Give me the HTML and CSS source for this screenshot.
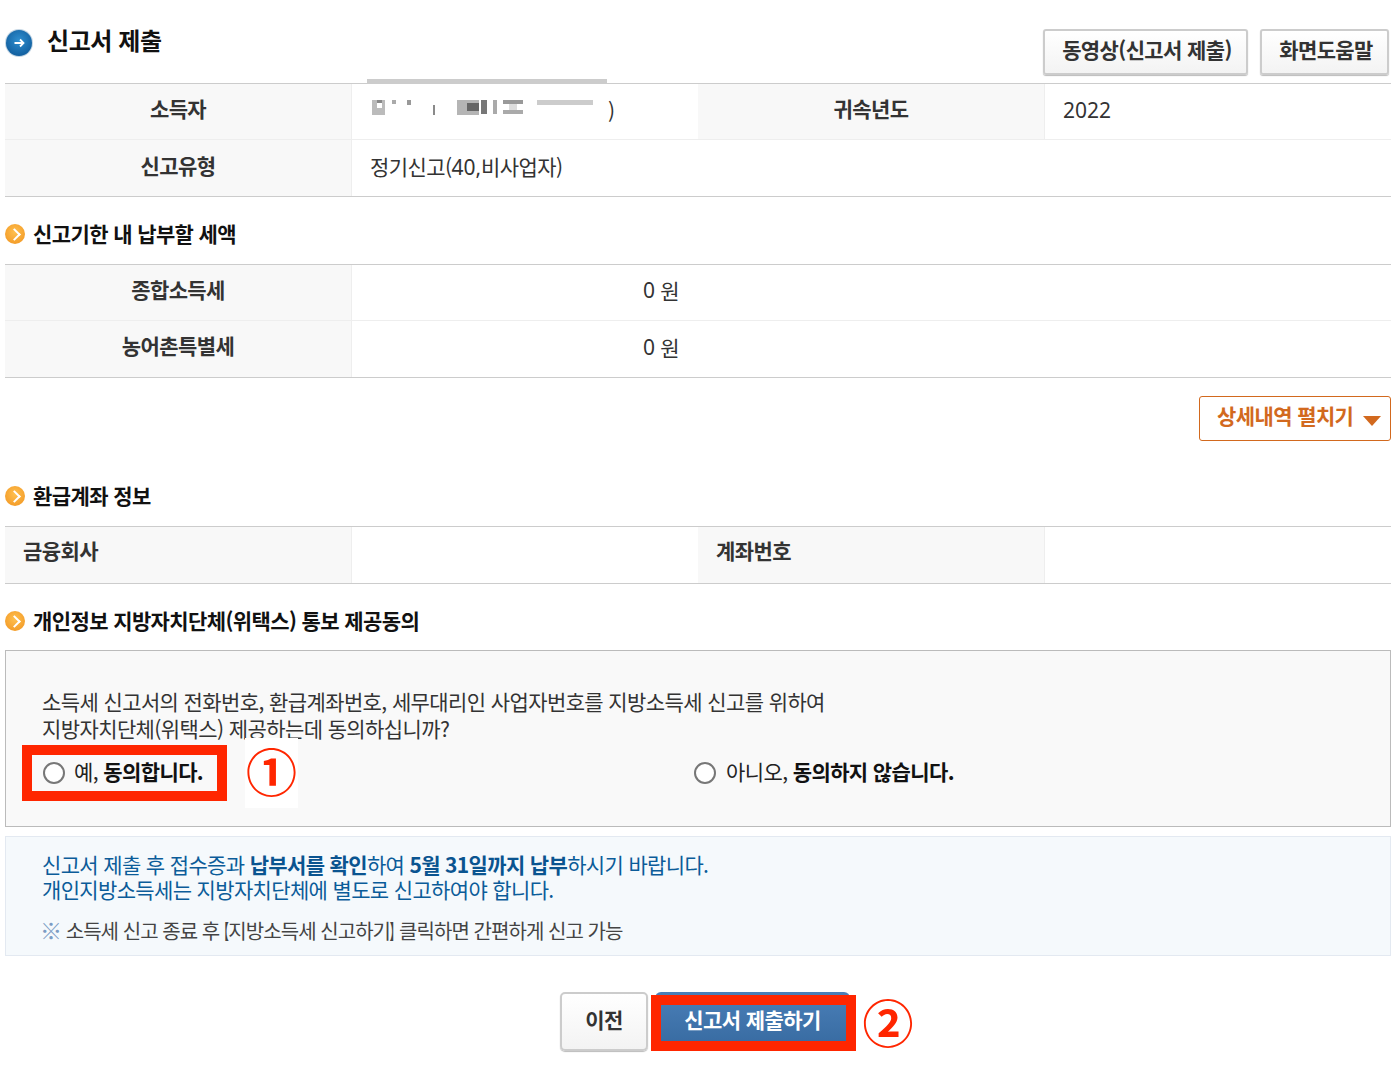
FILE: index.html
```html
<!DOCTYPE html>
<html lang="ko">
<head>
<meta charset="utf-8">
<title>신고서 제출</title>
<link rel="stylesheet" href="styles.css">
</head>
<body>
<main class="page">
  <header class="top">
    <h1 class="title">
      <svg class="title-icon" width="28" height="28" viewBox="0 0 28 28"><defs><radialGradient id="bl" cx="50%" cy="40%" r="60%"><stop offset="0" stop-color="#2f8fd0"/><stop offset="1" stop-color="#125f9f"/></radialGradient></defs><circle cx="14" cy="14" r="14" fill="#c4d6e4"/><circle cx="14" cy="14" r="13" fill="url(#bl)"/><path d="M9.500 14h9M15 10.500L18.500 14L15 17.500" fill="none" stroke="#fff" stroke-width="1.800"/></svg>
      <span>신고서 제출</span>
    </h1>
    <div class="top-btns">
      <button class="gbtn video">동영상(신고서 제출)</button>
      <button class="gbtn help">화면도움말</button>
    </div>
    <i class="tab-line"></i>
  </header>

  <div class="tbl four first">
    <div class="th">소득자</div>
    <div class="td mosaic-cell">
      <svg width="250" height="24" viewBox="0 0 250 24"><g fill="#8a8a8a"><rect x="3" y="3" width="13" height="15" fill="#bbb"/><rect x="8" y="6" width="5" height="5" fill="#fff"/><rect x="8" y="3" width="5" height="3" fill="#888"/><rect x="23" y="3" width="4" height="4" fill="#aaa"/><rect x="38" y="3" width="4" height="5" fill="#999"/><rect x="64" y="8" width="2" height="10"/><rect x="88" y="3" width="22" height="15" fill="#b5b5b5"/><rect x="98" y="6" width="12" height="8" fill="#666"/><rect x="112" y="3" width="6" height="14" fill="#777"/><rect x="124" y="3" width="4" height="14" fill="#aaa"/><rect x="134" y="3" width="20" height="4" fill="#999"/><rect x="134" y="13" width="20" height="4" fill="#aaa"/><rect x="140" y="7" width="8" height="6" fill="#ddd"/><rect x="168" y="3" width="56" height="5" fill="#ccc"/></g></svg>
      <span class="paren">)</span>
    </div>
    <div class="th">귀속년도</div>
    <div class="td year"><span class="latin">2022</span></div>
    <div class="th">신고유형</div>
    <div class="td span3"><span>정기신고(<span class="latin">40,</span>비사업자)</span></div>
  </div>

  <h2 class="sec sec-a"><i class="dot"></i>신고기한 내 납부할 세액</h2>
  <div class="tbl pair">
    <div class="th">종합소득세</div>
    <div class="td amount"><span class="latin">0</span>&nbsp;원</div>
    <div class="th">농어촌특별세</div>
    <div class="td amount"><span class="latin">0</span>&nbsp;원</div>
  </div>

  <div class="more-row">
    <button class="more">상세내역 펼치기<i class="tri"></i></button>
  </div>

  <h2 class="sec sec-b"><i class="dot"></i>환급계좌 정보</h2>
  <div class="tbl four bank">
    <div class="th left">금융회사</div>
    <div class="td"></div>
    <div class="th left">계좌번호</div>
    <div class="td"></div>
  </div>

  <h2 class="sec sec-c"><i class="dot"></i>개인정보 지방자치단체(위택스) 통보 제공동의</h2>
  <section class="agree">
    <p class="q">소득세 신고서의 전화번호, 환급계좌번호, 세무대리인 사업자번호를 지방소득세 신고를 위하여<br>지방자치단체(위택스) 제공하는데 동의하십니까?</p>
    <div class="choices">
      <label class="choice yes"><i class="radio"></i><span>예, <b>동의합니다.</b></span><i class="red-box"></i><i class="num num-one">①</i></label>
      <label class="choice"><i class="radio"></i><span>아니오, <b>동의하지 않습니다.</b></span></label>
    </div>
  </section>

  <section class="notice">
    <p class="blue">신고서 제출 후 접수증과 <b>납부서를 확인</b>하여 <b>5월 31일까지 납부</b>하시기 바랍니다.<br>개인지방소득세는 지방자치단체에 별도로 신고하여야 합니다.</p>
    <p class="note"><span class="mark">※</span> 소득세 신고 종료 후<span class="brk">【</span>지방소득세 신고하기<span class="brk">】</span>클릭하면 간편하게 신고 가능</p>
  </section>

  <div class="actions">
    <button class="gbtn prev">이전</button>
    <div class="submit-wrap">
      <button class="submit">신고서 제출하기</button>
      <i class="red-box"></i>
      <i class="num num-two">②</i>
    </div>
  </div>
</main>
</body>
</html>
```

FILE: styles.css
```css
* { box-sizing: border-box; }
html, body { margin: 0; padding: 0; background: #fff; }
body {
  font-family: "Noto Sans CJK KR", "Noto Sans", sans-serif;
  color: #333;
  font-size: 21px;
  letter-spacing: -0.6px;
}
i { font-style: normal; }
.page { width: 1391px; height: 1092px; padding-left: 5px; }
.latin { font-family: "Noto Sans", sans-serif; letter-spacing: 0; }

.top { height: 83px; display: flex; justify-content: space-between; position: relative; }
.title {
  margin: 0; padding-top: 26px; display: flex; align-items: flex-start; gap: 14px;
  font-size: 24px; line-height: 28px; font-weight: 700; color: #111; letter-spacing: -0.4px;
}
.title-icon { margin-top: 3px; flex: none; }
.top-btns { display: flex; gap: 12px; padding: 29px 2px 0 0; }
.tab-line { position: absolute; left: 362px; top: 79px; width: 240px; height: 4px; background: #ccc; }

.gbtn {
  height: 46px; padding: 0 0 6px 3px;
  font: 700 21px/1 "Noto Sans CJK KR", sans-serif; letter-spacing: -0.6px; color: #333;
  background: linear-gradient(#fff, #f3f3f3);
  border: 2px solid #ccc; border-radius: 3px;
  box-shadow: 0 1px 1px #bbb;
}
.video { width: 205px; }
.help { width: 129px; }

.tbl { display: grid; border-top: 1px solid #ccc; border-bottom: 1px solid #ccc; }
.four { grid-template-columns: 347px 346px 347px 346px; }
.pair { grid-template-columns: 347px 1039px; }
.th {
  height: 56px; background: #f8f8f8; border-right: 1px solid #eee; border-bottom: 1px solid #eee;
  display: flex; align-items: center; justify-content: center; padding-bottom: 8px;
  font-weight: 700; color: #333;
}
.td {
  height: 56px; border-bottom: 1px solid #eee; display: flex; align-items: center;
  padding: 0 18px 5px; color: #333;
}
.year { padding-bottom: 3px; }
.first .span3 { grid-column: span 3; padding-bottom: 5px; }
.tbl > .th:nth-last-child(2), .tbl > .td:last-child { border-bottom: 0; }
.first > .th:nth-child(5) { border-bottom: 0; padding-bottom: 6px; }
.bank > .th, .bank > .td { border-bottom: 0; }
.bank > .th { padding-bottom: 10px; }
.left { justify-content: flex-start; padding-left: 18px; }
.amount { padding-left: 291px; padding-bottom: 5px; }
.mosaic-cell { padding-left: 17px; position: relative; }
.paren { position: absolute; left: 256px; top: 11px; }

.sec {
  margin: 0; display: flex; align-items: flex-start; gap: 8px;
  font-size: 21px; line-height: 28px; font-weight: 700; color: #111;
}
.sec-a { padding-top: 22px; height: 67px; }
.sec-b { padding-top: 40px; height: 85px; }
.sec-c { padding-top: 22px; height: 66px; }
.dot {
  width: 20px; height: 20px; border-radius: 50%; flex: none; margin-top: 5px; position: relative;
  background: radial-gradient(circle at 50% 40%, #ffc04f, #f0921e);
}
.dot::after {
  content: ""; position: absolute; left: 5px; top: 6px; width: 7px; height: 7px;
  border-top: 2px solid #fff; border-right: 2px solid #fff; transform: rotate(45deg);
}

.more-row { display: flex; justify-content: flex-end; padding-top: 18px; height: 63px; }
.more {
  width: 192px; height: 45px; padding: 0 0 6px 17px; display: flex; align-items: center;
  background: #fff; border: 1px solid #d2691e; border-radius: 3px;
  font: 700 21px/1 "Noto Sans CJK KR", sans-serif; letter-spacing: -0.6px; color: #d2691e;
}
.tri {
  margin: 10px 0 0 10px; width: 0; height: 0;
  border-left: 9.500px solid transparent; border-right: 9.500px solid transparent; border-top: 10px solid #d2691e;
}

.agree {
  height: 177px; border: 1px solid #bbb; background: #f9f9f9; padding: 37px 0 0 36px;
}
.q { margin: 0; line-height: 27px; }
.choices { display: flex; padding-top: 1px; }
.choice {
  display: flex; align-items: center; gap: 10px; height: 56px; color: #222; position: relative;
}
.choice b { color: #111; }
.yes { width: 652px; padding-left: 1px; gap: 9px; }
.radio {
  width: 22px; height: 22px; border-radius: 50%; border: 2px solid #777; background: #fff; flex: none; margin-top: 3px;
}
.red-box { position: absolute; border: 10px solid #ff2600; pointer-events: none; }
.yes .red-box { left: -20px; top: 2px; width: 205px; height: 56px; }
.num {
  position: absolute; color: #ff2600; font-family: "Noto Sans CJK KR", sans-serif; letter-spacing: 0; font-weight: 700;
  display: flex; align-items: center; justify-content: center;
}
.num-one {
  left: 203px; top: -5px; width: 53px; height: 70px; padding-bottom: 6px; background: #fff; font-size: 51px;
}

.notice {
  margin-top: 9px; height: 120px; border: 1px solid #e3e9f1; background: #f5f9fc; padding: 15px 0 0 36px;
}
.blue { margin: 0; line-height: 25px; color: #0b5c99; letter-spacing: -0.65px; }
.blue b { color: #0a5490; }
.note { margin: 15px 0 0; line-height: 25px; font-size: 20px; letter-spacing: -0.95px; color: #444; }
.mark { color: #7b9cc4; font-size: 22px; margin-left: -2px; }
.brk { display: inline-block; font-weight: 700; transform: scaleX(0.5); margin: 0 -5px; }

.actions { display: flex; padding: 36px 0 0 555px; gap: 7px; }
.prev { width: 88px; height: 59px; padding: 0 0 5px; border-radius: 5px; }
.submit-wrap { position: relative; }
.submit {
  width: 195px; height: 59px; padding: 0 0 5px; border: 0; border-radius: 6px; color: #fff;
  background: linear-gradient(#4a7fb8, #36699f);
  font: 700 21px/1 "Noto Sans CJK KR", sans-serif; letter-spacing: -0.6px;
}
.submit-wrap .red-box { left: -4px; top: 3px; width: 205px; height: 56px; }
.num-two { left: 205px; top: -2px; width: 56px; height: 62px; font-size: 51px; }
```
